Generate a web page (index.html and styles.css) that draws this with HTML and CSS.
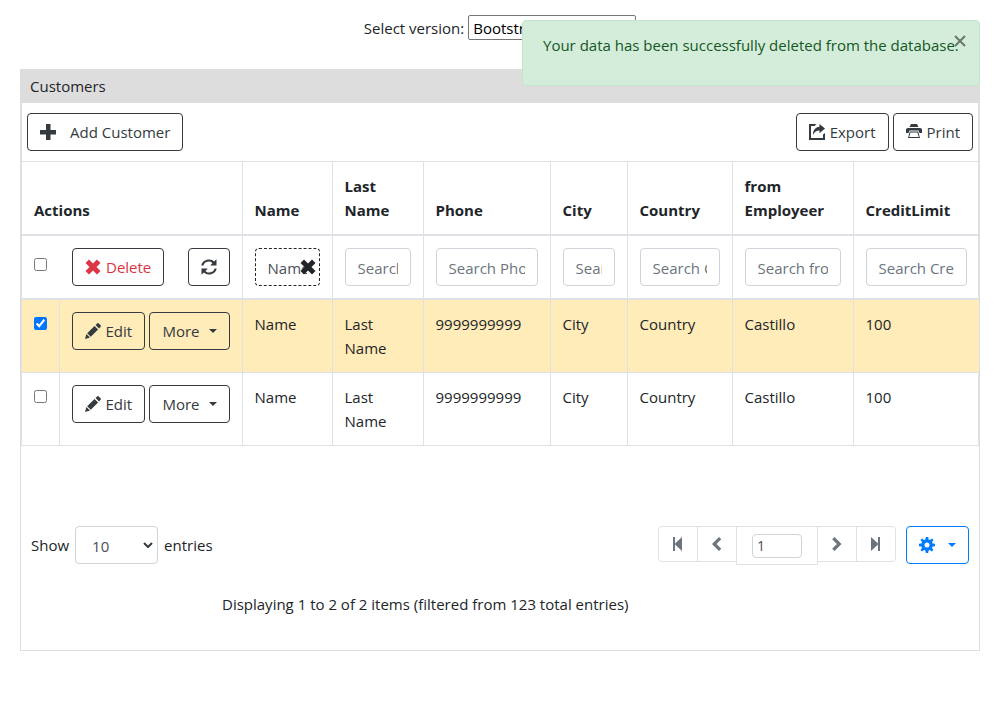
FILE: index.html
```html
<!DOCTYPE html>
<html lang="en">
<head>
<meta charset="utf-8">
<meta name="viewport" content="width=device-width, initial-scale=1">
<title>Customers</title>
<link rel="stylesheet" href="styles.css">
</head>
<body>
<svg class="sprite" aria-hidden="true">
  <symbol id="plus" viewBox="0 0 16 16"><path d="M6 0h4.500v6H16v4.500h-5.500V16H6v-5.500H0V6h6z"/></symbol>
  <symbol id="remove" viewBox="0 0 16 16"><path d="M4 .5 8 4.500 12 .5 15.500 4 11.500 8l4 4-3.500 3.500-4-4-4 4L.5 12l4-4-4-4z"/></symbol>
  <symbol id="export" viewBox="0 0 16 16"><path d="M0 0h7.500L5.500 2H2v12h12v-3.500l2.500-2V16H0zM10.500 0 16 4.600l-5.500 4.600V6.500C7.500 6.500 5.500 8 4 10.700 4 6 6.500 3 10.500 2.700z"/></symbol>
  <symbol id="print" viewBox="0 0 16 16"><path fill-rule="evenodd" d="M5 0h6l1.500 3h-9zM2 4h12c1.300 0 2 .8 2 2v3h-2.500l-1-2.500h-9L2.500 9H0V6c0-1.200.7-2 2-2zM3.800 7.500h8.400l1.800 6.500H2zm.8 1L3.200 13h9.600l-1.400-4.500z"/></symbol>
  <symbol id="refresh" viewBox="0 0 16 16"><path d="M.3 6.500C1 2.800 4.200.5 8 .5c2 0 3.700.7 5.100 1.900L15.500.3v6.200H9.300l2.200-2.400C10.500 3.100 9.300 2.500 8 2.500c-2.700 0-5 1.500-5.600 4zM15.700 9.500C15 13.200 11.800 15.500 8 15.500c-2 0-3.700-.7-5.100-1.900L.5 15.700V9.500h6.200l-2.200 2.400c1 1 2.200 1.600 3.500 1.600 2.700 0 5-1.500 5.600-4z"/></symbol>
  <symbol id="pencil" viewBox="0 0 16 16"><path d="m0 16 1.400-5L5 14.600zM2.200 10.200 9.500 2.900l3.600 3.600-7.300 7.300zM10.500 1.900 12.200.4c.5-.5 1-.5 1.500 0l1.900 1.900c.5.500.5 1 0 1.500l-1.500 1.700z"/></symbol>
  <symbol id="first" viewBox="0 0 16 16"><path d="M3 1h2v6.500L12 1v14L5 8.500V15H3z"/></symbol>
  <symbol id="last" viewBox="0 0 16 16"><path d="M12 1h-2v6.500L3 1v14l7-6.500V15h2z"/></symbol>
  <symbol id="prev" viewBox="0 0 16 16"><path d="m10 1 2.300 2.300L7.500 8l4.800 4.700L10 15 3 8z"/></symbol>
  <symbol id="next" viewBox="0 0 16 16"><path d="M5.500 1 3.200 3.300 8 8l-4.800 4.700L5.500 15l7-7z"/></symbol>
  <symbol id="cog" viewBox="0 0 16 16"><path fill-rule="evenodd" d="M6.800 0h2.400l.4 2.400 1.400.6 2-1.400L14.500 3l-1.500 2 .6 1.400 2.400.4v2.400l-2.400.4L13 11l1.400 2-1.500 1.500-2-1.400-1.400.6-.3 2.300H6.800l-.4-2.400L5 13l-2 1.400L1.500 13 3 11l-.6-1.400L0 9.200V6.800l2.400-.4L3 5 1.500 3 3 1.500 5 3l1.400-.6zM8 5.500a2.500 2.500 0 1 0 0 5 2.500 2.500 0 0 0 0-5z"/></symbol>
  <symbol id="caret" viewBox="0 0 8 4"><path d="M0 0h8L4 4z"/></symbol>
  <symbol id="chevron" viewBox="0 0 10 6"><path d="m1 1 4 4 4-4" fill="none" stroke="currentColor" stroke-width="2"/></symbol>
  <symbol id="close" viewBox="0 0 12 12"><path d="m1 1 10 10M11 1 1 11" fill="none" stroke="currentColor" stroke-width="2"/></symbol>
</svg>

<div class="alert" role="alert">
  Your data has been successfully deleted from the database.
  <button class="alert-close" type="button" aria-label="Close"><svg class="icon-small"><use href="#close"/></svg></button>
</div>

<div class="version">
  <label for="version">Select version:</label>
  <select id="version" class="version-select"><option>Bootstrap 4</option></select>
</div>

<main class="panel">
  <h1 class="panel-title">Customers</h1>
  <div class="panel-body">
    <div class="toolbar">
      <button class="btn btn-add" type="button"><svg class="icon"><use href="#plus"/></svg>Add Customer</button>
      <div class="toolbar-right">
        <button class="btn" type="button"><svg class="icon"><use href="#export"/></svg>Export</button>
        <button class="btn" type="button"><svg class="icon"><use href="#print"/></svg>Print</button>
      </div>
    </div>
    <table class="grid">
      <colgroup>
        <col class="c-check"><col class="c-actions"><col class="c-name"><col class="c-last"><col class="c-phone"><col class="c-city"><col class="c-country"><col class="c-employee"><col class="c-credit">
      </colgroup>
      <thead>
        <tr class="headings">
          <th colspan="2">Actions</th><th>Name</th><th>Last Name</th><th>Phone</th><th>City</th><th>Country</th><th>from Employeer</th><th>CreditLimit</th>
        </tr>
        <tr class="filters">
          <td colspan="2">
            <div class="bulk">
              <input class="check" type="checkbox" aria-label="Select all">
              <button class="btn btn-delete" type="button"><svg class="icon"><use href="#remove"/></svg>Delete</button>
              <button class="btn btn-refresh" type="button" aria-label="Refresh"><svg class="icon"><use href="#refresh"/></svg></button>
            </div>
          </td>
          <td><div class="filter-box"><input class="field field-active" value="Name" aria-label="Search Name"><button class="clear" type="button" aria-label="Clear"><svg class="icon"><use href="#remove"/></svg></button></div></td>
          <td><input class="field" placeholder="Search Last Name" aria-label="Search Last Name"></td>
          <td><input class="field" placeholder="Search Phone" aria-label="Search Phone"></td>
          <td><input class="field" placeholder="Search City" aria-label="Search City"></td>
          <td><input class="field" placeholder="Search Country" aria-label="Search Country"></td>
          <td><input class="field" placeholder="Search from Employeer" aria-label="Search from Employeer"></td>
          <td><input class="field" placeholder="Search CreditLimit" aria-label="Search CreditLimit"></td>
        </tr>
      </thead>
      <tbody>
        <tr class="selected">
          <td><input class="check" type="checkbox" checked aria-label="Select row 1"></td>
          <td><div class="row-actions"><button class="btn btn-edit" type="button"><svg class="icon"><use href="#pencil"/></svg>Edit</button><button class="btn btn-more" type="button">More<svg class="caret"><use href="#caret"/></svg></button></div></td>
          <td>Name</td><td>Last Name</td><td>9999999999</td><td>City</td><td>Country</td><td>Castillo</td><td>100</td>
        </tr>
        <tr>
          <td><input class="check" type="checkbox" aria-label="Select row 2"></td>
          <td><div class="row-actions"><button class="btn btn-edit" type="button"><svg class="icon"><use href="#pencil"/></svg>Edit</button><button class="btn btn-more" type="button">More<svg class="caret"><use href="#caret"/></svg></button></div></td>
          <td>Name</td><td>Last Name</td><td>9999999999</td><td>City</td><td>Country</td><td>Castillo</td><td>100</td>
        </tr>
      </tbody>
    </table>
  </div>
  <footer class="footer">
    <div class="footer-row">
      <div class="entries">
        <label for="size">Show</label>
        <span class="size-box"><select id="size" class="size"><option>10</option></select><svg class="chevron"><use href="#chevron"/></svg></span>
        <span>entries</span>
      </div>
      <div class="paging">
        <nav class="pages" aria-label="Pages">
          <button class="page" type="button" aria-label="First page"><svg class="icon"><use href="#first"/></svg></button>
          <button class="page" type="button" aria-label="Previous page"><svg class="icon"><use href="#prev"/></svg></button>
          <span class="page-current"><input class="page-input" value="1" aria-label="Page number"></span>
          <button class="page" type="button" aria-label="Next page"><svg class="icon"><use href="#next"/></svg></button>
          <button class="page" type="button" aria-label="Last page"><svg class="icon"><use href="#last"/></svg></button>
        </nav>
        <button class="btn btn-settings" type="button" aria-label="Settings"><svg class="icon"><use href="#cog"/></svg><svg class="caret"><use href="#caret"/></svg></button>
      </div>
    </div>
    <p class="summary">Displaying 1 to 2 of 2 items (filtered from 123 total entries)</p>
  </footer>
</main>
</body>
</html>
```
FILE: styles.css
```css
* { box-sizing: border-box; }
body {
  margin: 0;
  padding: 15px 20px 20px;
  font: 15px/24px "Segoe UI", "Open Sans", sans-serif;
  color: #212529;
  background: #fff;
}
button, input, select { font: inherit; color: inherit; margin: 0; }
button { cursor: pointer; }
svg { display: block; flex: none; fill: currentColor; }
.sprite { position: absolute; width: 0; height: 0; }
.icon { width: 16px; height: 16px; }
.icon-small { width: 12px; height: 12px; }
.caret { width: 8px; height: 4px; }

.alert {
  position: absolute;
  z-index: 2;
  top: 20px;
  right: 20px;
  width: 458px;
  padding: 12px 20px 28px;
  border: 1px solid #c3e6cb;
  border-radius: 4px;
  background: #d4edda;
  color: #155724;
  white-space: nowrap;
}
.alert-close {
  position: absolute;
  top: 14px;
  right: 13px;
  padding: 0;
  border: 0;
  background: none;
  color: #6a776d;
}

.version {
  display: flex;
  justify-content: center;
  align-items: center;
  gap: 4px;
  margin-bottom: 29px;
}
.version-select {
  width: 168px;
  height: 25px;
  padding: 0;
  border: 1px solid #767676;
  border-radius: 2px;
  background: #fff;
  color: #000;
}

.panel { border: 1px solid #ddd; }
.panel-title {
  margin: 0;
  padding: 4px 9px 5px;
  background: #ddd;
  font-size: 15px;
  font-weight: 400;
  line-height: 24px;
}
.panel-body { border: solid #dee2e6; border-width: 0 1px; }
.toolbar {
  display: flex;
  justify-content: space-between;
  padding: 10px 5px;
}
.toolbar-right { display: flex; gap: 4px; }
.row-actions { display: flex; justify-content: space-between; }

.btn {
  display: inline-flex;
  align-items: center;
  gap: 5px;
  height: 38px;
  padding: 0 12px;
  border: 1px solid #343a40;
  border-radius: 4px;
  background: transparent;
  color: #343a40;
  white-space: nowrap;
}
.btn-add { gap: 14px; }
.btn-delete { color: #dc3545; }
.btn-more { gap: 9px; }
.btn-settings { gap: 13px; border-color: #007bff; color: #007bff; }

.grid {
  width: 100%;
  table-layout: fixed;
  border-collapse: collapse;
}
.c-check { width: 37px; }
.c-actions { width: 183px; }
.c-name { width: 90px; }
.c-last { width: 91px; }
.c-phone { width: 127px; }
.c-city { width: 77px; }
.c-country { width: 105px; }
.c-employee { width: 121px; }
.c-credit { width: 126px; }
.grid th, .grid td {
  padding: 12px;
  border: 1px solid #dee2e6;
  text-align: left;
  vertical-align: top;
}
.grid th { vertical-align: bottom; font-weight: 700; }
.grid tr > :first-child { border-left: 0; }
.grid tr > :last-child { border-right: 0; }
.grid thead th, .grid thead td { border-bottom-width: 2px; }
.grid .selected { background: #ffecb8; }
.check { display: block; width: 13px; height: 13px; margin-top: 5px; accent-color: #0075ff; }
.bulk { display: flex; align-items: flex-start; }
.bulk .check { margin: 10px 25px 0 0; }
.btn-refresh { margin-left: auto; }
.field {
  display: block;
  width: 100%;
  height: 38px;
  padding: 2px 12px 0;
  border: 1px solid #ced4da;
  border-radius: 4px;
  background: #fff;
  color: #495057;
}
.field::placeholder { color: #6c757d; opacity: 1; }
.field-active { border: 1px dashed #212529; }
.filter-box { position: relative; }
.clear {
  position: absolute;
  top: 11px;
  right: 4px;
  padding: 0;
  border: 0;
  background: none;
}

.footer { padding: 80px 10px 33px; }
.footer-row { display: flex; justify-content: space-between; align-items: flex-start; }
.entries { display: flex; align-items: center; gap: 6px; }
.size-box { position: relative; }
.size {
  display: block;
  width: 83px;
  height: 38px;
  padding: 2px 16px 0;
  border: 1px solid #ced4da;
  border-radius: 4px;
  background: #fff;
  color: #495057;
  appearance: none;
}
.chevron {
  position: absolute;
  top: 16px;
  right: 5px;
  width: 10px;
  height: 6px;
  color: #343a40;
  pointer-events: none;
}
.paging { display: flex; align-items: flex-start; gap: 10px; }
.pages { display: flex; align-items: flex-start; }
.page {
  display: grid;
  place-items: center;
  width: 40px;
  height: 36px;
  padding: 0;
  border: 1px solid #dee2e6;
  background: #fff;
  color: #6c757d;
}
.page + .page, .page-current + .page { margin-left: -1px; }
.page:first-child { border-radius: 4px 0 0 4px; }
.page:last-child { border-radius: 0 4px 4px 0; }
.page-current {
  width: 82px;
  height: 39px;
  margin-left: -1px;
  padding: 7px 15px;
  border: 1px solid #dee2e6;
}
.page-input {
  display: block;
  width: 50px;
  height: 24px;
  padding: 0 4px;
  border: 1px solid #ced4da;
  border-radius: 4px;
  color: #495057;
  font-size: 14px;
}
.summary { margin: 27px 0 1px; padding-left: 191px; }
```
